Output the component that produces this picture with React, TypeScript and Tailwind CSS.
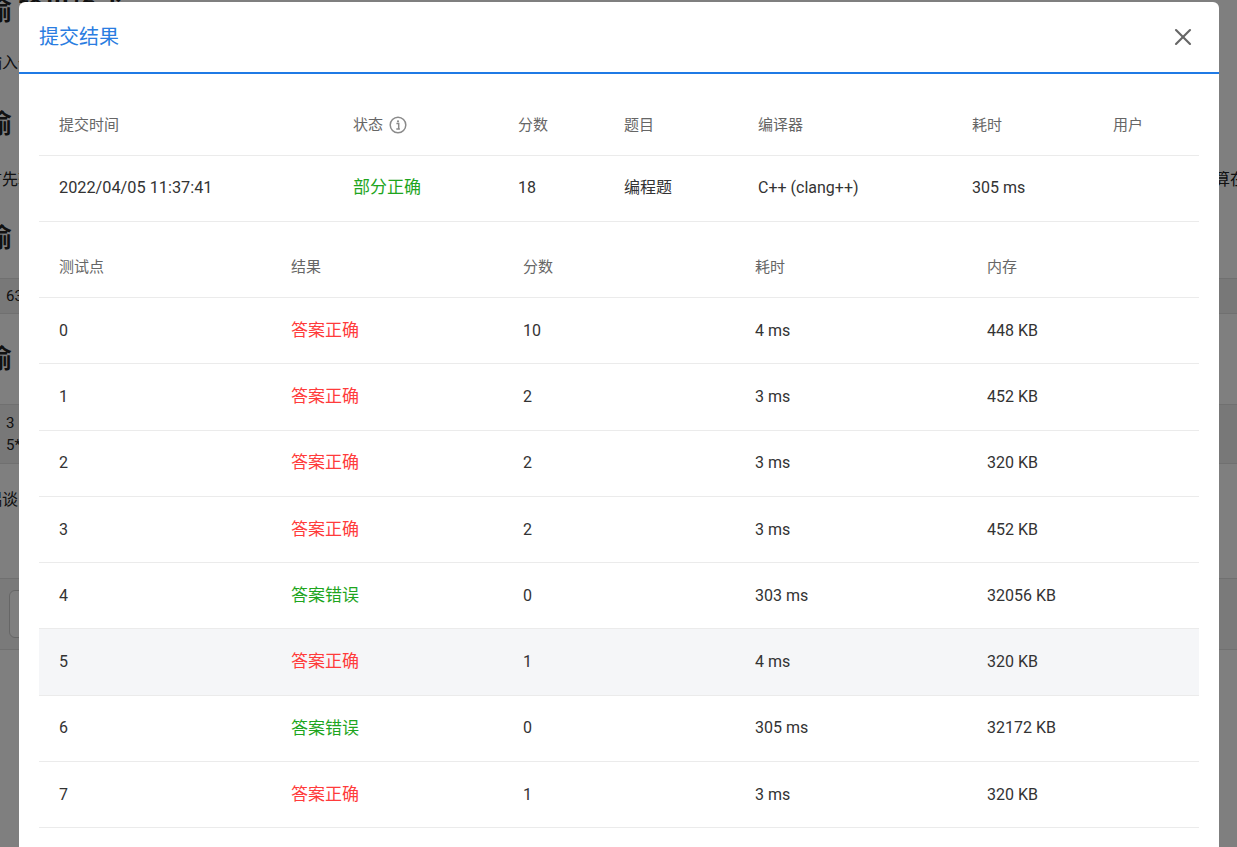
import { X } from 'lucide-react'

const font = { fontFamily: 'Roboto, "Noto Sans CJK SC", sans-serif' }

interface Point {
  id: number
  ok: boolean
  score: number
  time: string
  mem: string
}

const points: Point[] = [
  { id: 0, ok: true, score: 10, time: '4 ms', mem: '448 KB' },
  { id: 1, ok: true, score: 2, time: '3 ms', mem: '452 KB' },
  { id: 2, ok: true, score: 2, time: '3 ms', mem: '320 KB' },
  { id: 3, ok: true, score: 2, time: '3 ms', mem: '452 KB' },
  { id: 4, ok: false, score: 0, time: '303 ms', mem: '32056 KB' },
  { id: 5, ok: true, score: 1, time: '4 ms', mem: '320 KB' },
  { id: 6, ok: false, score: 0, time: '305 ms', mem: '32172 KB' },
  { id: 7, ok: true, score: 1, time: '3 ms', mem: '320 KB' },
]

function InfoIcon() {
  return (
    <svg width="18" height="18" viewBox="0 0 18 18" className="ml-[6px]">
      <circle cx="9" cy="9" r="7.8" fill="none" stroke="#8a8a8a" strokeWidth="1.5" />
      <circle cx="9" cy="5.3" r="1.1" fill="#8a8a8a" />
      <path d="M7.4 7.6h2.3v5.2M7.3 12.9h3.6" fill="none" stroke="#8a8a8a" strokeWidth="1.5" />
    </svg>
  )
}

// page behind the dimmed overlay, only its edges show
function BackgroundPage() {
  return (
    <div className="ml-[-14px] w-[1260px] text-[#222]" style={font}>
      <div className="h-[34px] flex items-center text-[26px] font-bold leading-none mt-[-6px]">偷 输出格式</div>
      <div className="h-[70px] flex items-center text-[16px]">输入一行整数</div>
      <div className="h-[52px] flex items-center text-[26px] font-bold">偷</div>
      <div className="h-[60px] flex items-center justify-between text-[16px]">
        <span>首先输入</span>
        <span>计算在</span>
      </div>
      <div className="h-[56px] flex items-center text-[26px] font-bold">偷</div>
      <div className="h-[36px] mt-[12px] bg-[#f0f0f0] border-y border-[#e0e0e0] flex items-center pl-[20px] text-[15px]">63</div>
      <div className="h-[90px] flex items-center text-[26px] font-bold">偷</div>
      <div className="h-[60px] bg-[#f0f0f0] border-y border-[#e0e0e0] flex flex-col justify-center pl-[20px] text-[15px] leading-[22px]">
        <span>3</span>
        <span>5*2</span>
      </div>
      <div className="h-[72px] flex items-center text-[16px]">偶谈</div>
      <div className="h-[72px] mt-[42px] bg-[#f5f5f5] border-y border-[#e0e0e0] flex items-center pl-[23px]">
        <div className="w-[200px] h-[48px] rounded-[6px] border border-[#ccc] bg-white" />
      </div>
    </div>
  )
}

export default function App() {
  return (
    <div className="relative h-[847px] overflow-hidden bg-white">
      <BackgroundPage />
      <div className="absolute inset-0 bg-black/50" />

      <div
        className="absolute left-[19px] top-[2px] w-[1200px] h-[900px] bg-white rounded-t-[6px]"
        style={font}
      >
        {/* header */}
        <div className="h-[72px] flex items-center justify-between pl-[20px] pr-[22px] border-b-2 border-[#1f7ae5]">
          <span className="text-[20px] text-[#2a7de1]">提交结果</span>
          <X size={28} strokeWidth={1.8} color="#666" />
        </div>

        <div className="px-[20px] pt-[21px]">
          {/* submission summary */}
          <table className="w-full border-collapse text-left">
            <thead>
              <tr className="h-[60px] border-b border-[#ebebeb] text-[15px] text-[#666]">
                <th className="font-normal pl-[20px] w-[294px]">提交时间</th>
                <th className="font-normal pl-[20px] w-[165px]">
                  <span className="flex items-center">状态<InfoIcon /></span>
                </th>
                <th className="font-normal pl-[20px] w-[106px]">分数</th>
                <th className="font-normal pl-[20px] w-[134px]">题目</th>
                <th className="font-normal pl-[20px] w-[214px]">编译器</th>
                <th className="font-normal pl-[20px] w-[141px]">耗时</th>
                <th className="font-normal pl-[20px]">用户</th>
              </tr>
            </thead>
            <tbody>
              <tr className="h-[66px] border-b border-[#ebebeb] text-[16px] text-[#333]">
                <td className="pl-[20px] text-[16.3px]">2022/04/05 11:37:41</td>
                <td className="pl-[20px] text-[17px] text-[#1ea51e]">部分正确</td>
                <td className="pl-[20px]">18</td>
                <td className="pl-[20px]">编程题</td>
                <td className="pl-[20px]">C++ (clang++)</td>
                <td className="pl-[20px]">305 ms</td>
                <td className="pl-[20px]"></td>
              </tr>
            </tbody>
          </table>

          {/* test points */}
          <table className="w-full border-collapse text-left mt-[16px] table-fixed">
            <thead>
              <tr className="h-[60px] border-b border-[#ebebeb] text-[15px] text-[#666]">
                <th className="font-normal pl-[20px]">测试点</th>
                <th className="font-normal pl-[20px]">结果</th>
                <th className="font-normal pl-[20px]">分数</th>
                <th className="font-normal pl-[20px]">耗时</th>
                <th className="font-normal pl-[20px]">内存</th>
              </tr>
            </thead>
            <tbody>
              {points.map((p) => (
                <tr
                  key={p.id}
                  className={
                    'h-[66.3px] border-b border-[#ebebeb] text-[16px] text-[#333] ' +
                    (p.id === 5 ? 'bg-[#f5f6f8]' : '')
                  }
                >
                  <td className="pl-[20px]">{p.id}</td>
                  <td className={'pl-[20px] text-[17px] ' + (p.ok ? 'text-[#ff3b3b]' : 'text-[#1ea51e]')}>
                    {p.ok ? '答案正确' : '答案错误'}
                  </td>
                  <td className="pl-[20px]">{p.score}</td>
                  <td className="pl-[20px]">{p.time}</td>
                  <td className="pl-[20px]">{p.mem}</td>
                </tr>
              ))}
            </tbody>
          </table>
        </div>
      </div>
    </div>
  )
}
